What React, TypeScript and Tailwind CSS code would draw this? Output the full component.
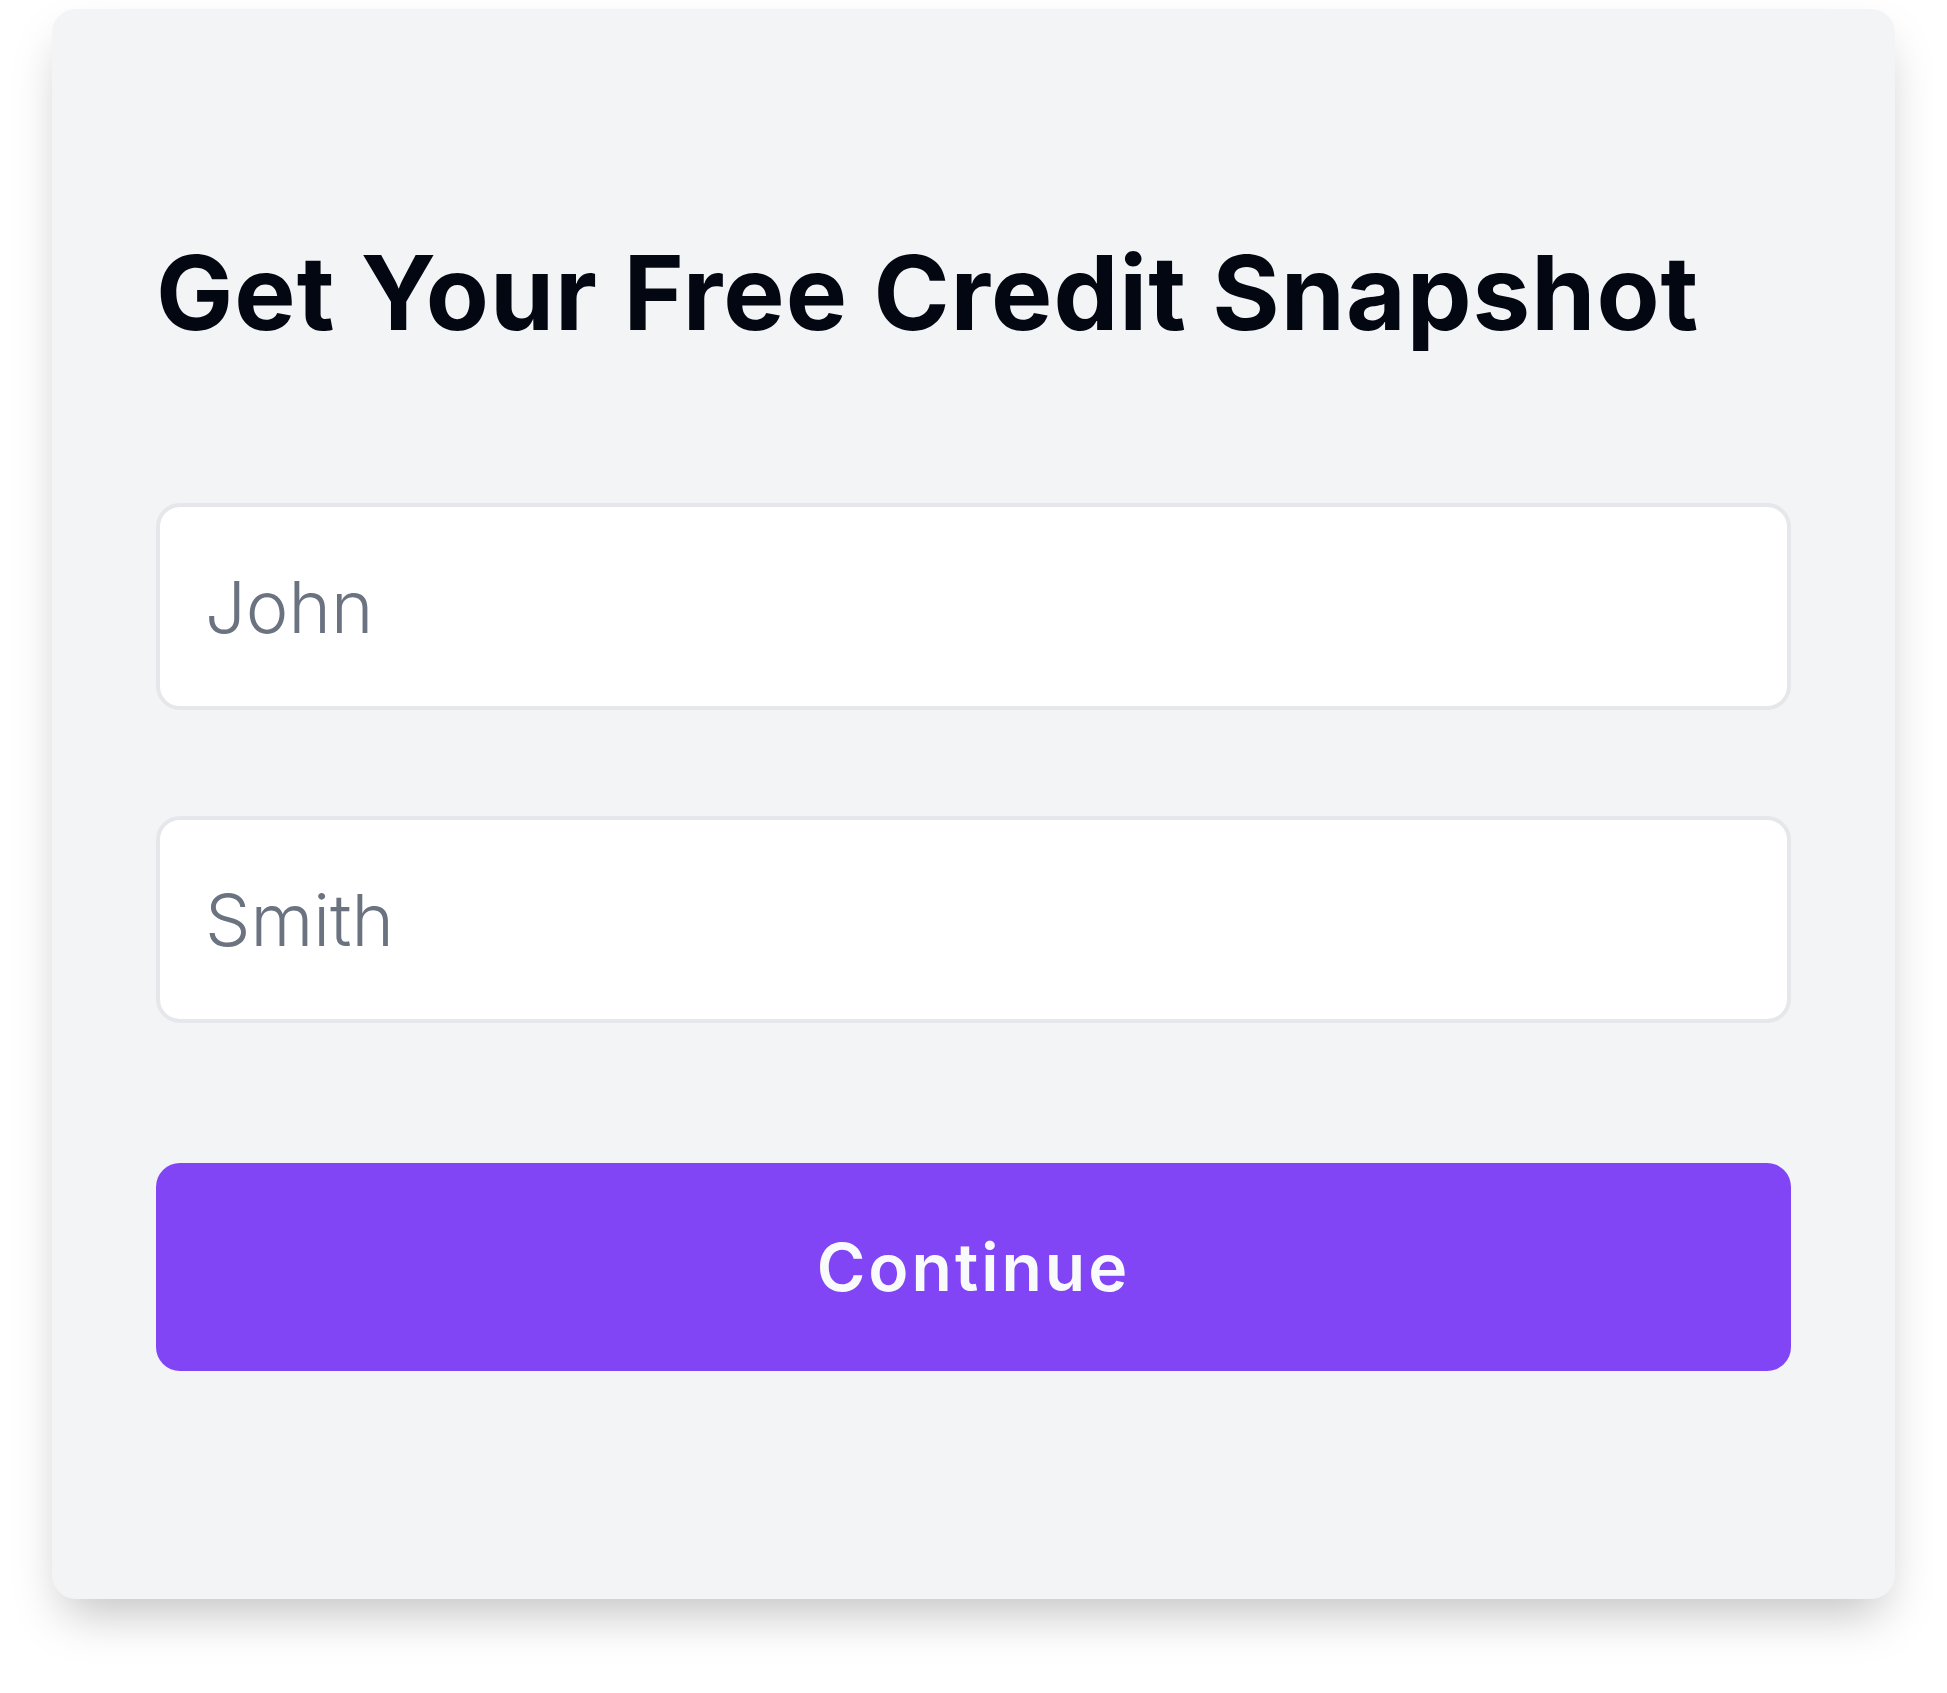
import React from "react";

export default function App() {
  return (
    <div className="min-h-screen w-full bg-white pt-[9px] px-[52px] pb-[96px]" style={{ fontFamily: "Inter, 'Noto Sans', sans-serif" }}>
      <div className="w-full rounded-[24px] bg-[#f3f4f6] shadow-2xl px-[104px] pt-[232px] pb-[228px] flex flex-col">
        <h1 className="text-[103px] leading-none font-bold text-[#030712] tracking-[1px]">
          Get Your Free Credit Snapshot
        </h1>
        <input
          type="text"
          placeholder="John"
          className="mt-[159px] h-[207px] w-full rounded-[24px] border-4 border-[#e5e7eb] bg-white pl-[45px] text-[72px] font-light text-[#111827] placeholder:text-[#6b7280] outline-none"
        />
        <input
          type="text"
          placeholder="Smith"
          className="mt-[106px] h-[207px] w-full rounded-[24px] border-4 border-[#e5e7eb] bg-white pl-[45px] text-[72px] font-light text-[#111827] placeholder:text-[#6b7280] outline-none"
        />
        <button
          type="button"
          className="mt-[140px] h-[208px] w-full rounded-[24px] bg-[#8245f6] text-[66px] font-semibold tracking-[3px] text-[#f8fafc] flex items-center justify-center"
        >
          Continue
        </button>
      </div>
    </div>
  );
}
